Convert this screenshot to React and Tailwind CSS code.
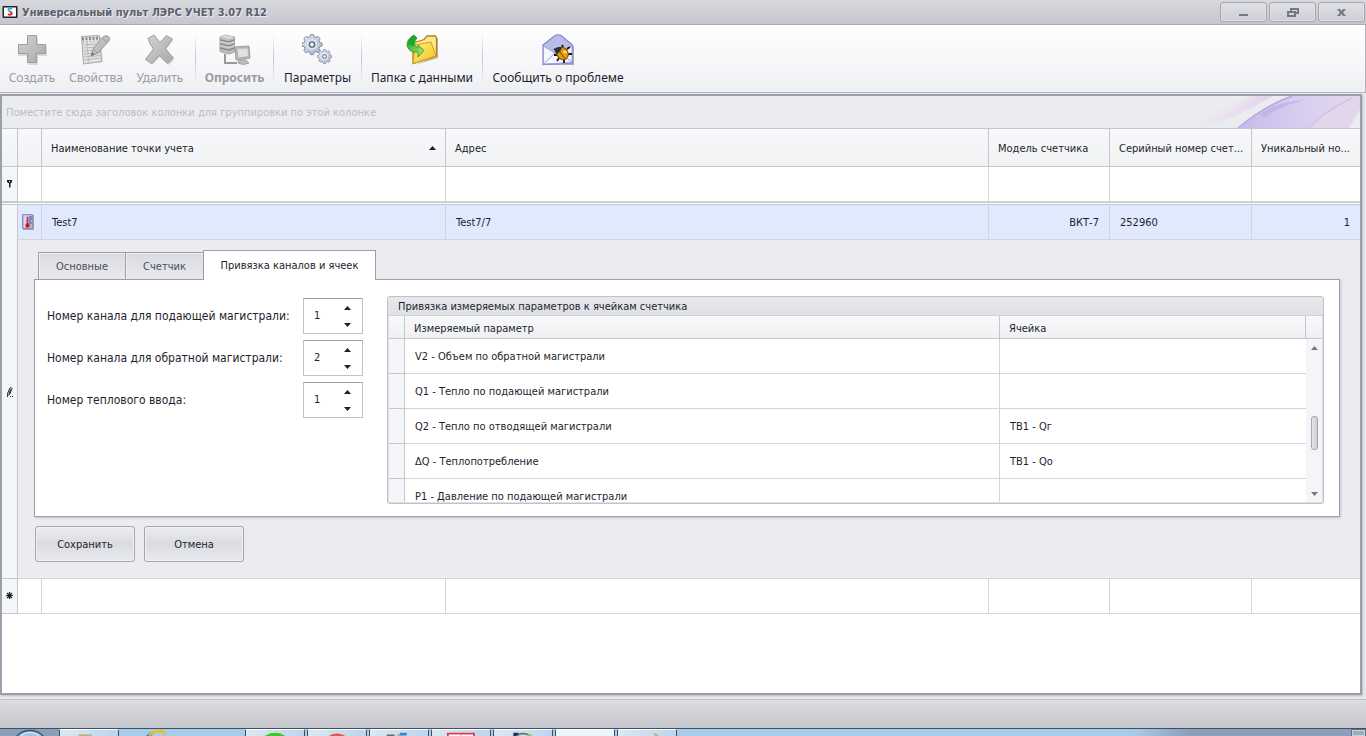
// src/App.jsx

import { useState } from "react";

const UI_FONT = "font-['DejaVu_Sans_Condensed','DejaVu_Sans',sans-serif]";
const BAR_FONT = "font-['Noto_Sans','Open_Sans',sans-serif]";

const TABS = ["Основные", "Счетчик", "Привязка каналов и ячеек"];
const TAB_WIDTHS = ["w-[87px]", "w-[78px]", "w-[173px]"];

const CHANNELS = [
  { id: "supply", label: "Номер канала для подающей магистрали:", value: 1 },
  { id: "return", label: "Номер канала для обратной магистрали:", value: 2 },
  { id: "input", label: "Номер теплового ввода:", value: 1 },
];

const PARAMS = [
  { name: "V2 - Объем по обратной магистрали", cell: "" },
  { name: "Q1 - Тепло по подающей магистрали", cell: "" },
  { name: "Q2 - Тепло по отводящей магистрали", cell: "ТВ1 - Qг" },
  { name: "ΔQ - Теплопотребление", cell: "ТВ1 - Qо" },
  { name: "P1 - Давление по подающей магистрали", cell: "" },
];

export default function App() {
  return (
    <div className={`flex min-h-screen flex-col overflow-hidden bg-[#e9eaee] text-[11px] text-[#1e1e2d] ${UI_FONT}`}>
      <TitleBar />
      <Toolbar />

      <main className="mt-px mr-1 mb-1 flex flex-1 flex-col border-2 border-[#9d9eab] bg-white shadow-[1px_1px_2px_#b9bac4]">
        <GroupPanel />
        <PointsTable />
      </main>

      <footer className="h-[29px] border-t border-[#c0c1c8] bg-linear-to-b from-[#dcdde2] to-[#c7c8ce]" />
      <Taskbar />
    </div>
  );
}

/* ---------- window caption ---------- */

function TitleBar() {
  return (
    <header className="flex h-[25px] items-center justify-between border-b border-[#a9aab5] bg-linear-to-b from-[#d8d9de] to-[#c6c7cd] pr-px pl-[2px]">
      <div className="flex items-center gap-1">
        <svg width="16" height="14" viewBox="0 0 16 14">
          <rect x="0.5" y="1" width="15" height="12" rx="1" fill="#1c2226" />
          <rect x="2" y="2.5" width="12" height="9" fill="#fff" />
          <path d="M10 4 Q8 2.500 6.500 4 Q6 5.500 8 6.500" fill="none" stroke="#22b5e8" strokeWidth="1.800" />
          <path d="M8 6.500 Q10.500 7.500 9.500 9 Q8 10.500 6 9" fill="none" stroke="#e0242c" strokeWidth="1.800" />
        </svg>
        <h1 className="pt-[2px] font-bold text-[#5d5e6d] [text-shadow:1px_1px_0_#ebecef]">
          Универсальный пульт ЛЭРС УЧЕТ 3.07 R12
        </h1>
      </div>

      <div className="flex gap-[2px]">
        <CaptionButton label="Свернуть">
          <path d="M5 10h9v2H5z" fill="#767786" />
        </CaptionButton>
        <CaptionButton label="Восстановить">
          <path d="M8 5h7v4h-7z M5 8h7v4h-7z" fill="none" stroke="#767786" strokeWidth="2" />
          <path d="M6 9h5v2h-5z" fill="#d4d5da" />
        </CaptionButton>
        <CaptionButton label="Закрыть">
          <path d="M5 5h3l1.500 2 1.500-2h3l-3 3.500 3 3.500h-3l-1.500-2-1.500 2h-3l3-3.500z" fill="#767786" />
        </CaptionButton>
      </div>
    </header>
  );
}

function CaptionButton({ label, children }) {
  return (
    <button
      type="button"
      aria-label={label}
      className="flex h-5 w-[47px] items-center justify-center rounded-[3px] border border-[#a4a5b1] bg-linear-to-b from-[#e0e1e5] to-[#cdced4] shadow-[inset_0_0_0_1px_#e1e2e6]"
    >
      <svg width="19" height="17" viewBox="0 0 19 17">
        {children}
      </svg>
    </button>
  );
}

/* ---------- toolbar ---------- */

function Toolbar() {
  return (
    <nav className={`flex h-[68px] border-r border-b border-[#b3b4bd] bg-linear-to-b from-white to-[#eff0f4] text-[12px] ${BAR_FONT}`}>
      <div className="flex pr-[3px]">
        <ToolButton label="Создать" width="w-16" disabled icon={<PlusIcon />} />
        <ToolButton label="Свойства" width="w-16" disabled icon={<NotepadIcon />} />
        <ToolButton label="Удалить" width="w-16" disabled icon={<CrossIcon />} />
      </div>
      <Separator />
      <ToolButton label="Опросить" width="w-[77px]" disabled bold icon={<ServerIcon />} />
      <Separator />
      <ToolButton label="Параметры" width="w-[87px]" icon={<GearsIcon />} />
      <Separator />
      <ToolButton label="Папка с данными" width="w-[120px]" icon={<FolderIcon />} />
      <Separator />
      <ToolButton label="Сообщить о проблеме" width="w-[150px]" icon={<BugMailIcon />} />
    </nav>
  );
}

function ToolButton({ label, width, icon, disabled, bold }) {
  return (
    <button
      type="button"
      disabled={disabled}
      className={`flex flex-col items-center gap-[3px] pt-[9px] leading-[18px] whitespace-nowrap ${width} ${
        disabled ? "text-[#9b9ca4]" : "text-[#1e1e2d]"
      } ${bold ? "font-bold" : ""}`}
    >
      {icon}
      {label}
    </button>
  );
}

function Separator() {
  return <div className="my-2 w-px bg-linear-to-b from-transparent via-[#c5c6cf] to-transparent" />;
}

function PlusIcon() {
  return (
    <svg width="32" height="32" viewBox="0 0 32 32">
      <defs>
        <linearGradient id="grey" x1="0" y1="0" x2="1" y2="1">
          <stop offset="0" stopColor="#d2d2d2" />
          <stop offset="1" stopColor="#aaaaaa" />
        </linearGradient>
      </defs>
      <path d="M12 3h10v9h9v10h-9v9h-10v-9h-10v-10h10z" fill="#000" opacity="0.12" />
      <path d="M11.500 1.500h9v9h9v9h-9v9h-9v-9h-9v-9h9z" fill="url(#grey)" stroke="#9d9d9d" />
    </svg>
  );
}

function NotepadIcon() {
  return (
    <svg width="32" height="32" viewBox="0 0 32 32">
      <path d="M3 4 L21 3 L23 28 L5 30 Z" fill="#000" opacity="0.12" />
      <path d="M1.500 2.500 L19.500 1.500 L21.500 27.500 L3.500 30 Z" fill="#e2e2e2" stroke="#a8a8a8" />
      <path
        d="M3 11l16-1M3.500 14l16-1M3.500 17l16-1M4 20l16-1.500M4 23l16-1.500M4.500 26l16-2M7 8l1.500 20"
        stroke="#bababa"
      />
      <path d="M2 5l18-1" stroke="#8e8e8e" strokeWidth="3" strokeDasharray="2 1.500" />
      <path d="M3 8l17-1" stroke="#a5a5a5" strokeWidth="1.500" strokeDasharray="1 2.500" />
      <path d="M11 22 L13 15 L23 3 Q26 0 29 3 Q31 5 28 8 L18 19 Z" fill="url(#grey)" stroke="#9a9a9a" />
      <path d="M22 4l6 5M13 15l5 4" stroke="#9a9a9a" />
      <path d="M11 22l1-4 3 2.500z" fill="#787878" />
    </svg>
  );
}

function CrossIcon() {
  return (
    <svg width="32" height="32" viewBox="0 0 32 32">
      <path
        d="M5 6 L10 2 Q14 7 17 10 L24 3 L29 7 L22 16 Q27 22 30 26 L25 31 L16 23 L8 31 L3 27 L11 16 Z"
        fill="#000"
        opacity="0.12"
      />
      <path
        d="M4 4.500 L10 1 Q13 5 16 8.500 L22.500 1.500 L28.500 5 L21.500 14.500 Q25.500 20 29.500 24 L23.500 29.500 Q19 25.500 15.500 21.500 L8 29.500 L1.500 25.500 L9.500 15 Q6 11 4 4.500 Z"
        fill="url(#grey)"
        stroke="#9d9d9d"
        strokeLinejoin="round"
      />
    </svg>
  );
}

function ServerIcon() {
  return (
    <svg width="32" height="32" viewBox="0 0 32 32">
      <path d="M1 3 L6 1 L15.500 3 V18 L10 20 L1 17.500 Z" fill="#bebebe" stroke="#a6a6a6" />
      <path d="M1 3 L6 1 L15.500 3 L10 5 Z" fill="#dadada" />
      <path d="M1 6l9 2 5.500-2M1 10l9 2 5.500-2M1 14l9 2 5.500-2" fill="none" stroke="#8c8c8c" strokeWidth="1.500" />
      <path d="M1 7.500l9 2 5.500-2M1 11.500l9 2 5.500-2" fill="none" stroke="#dedede" />
      <path d="M6 20v9h12" fill="none" stroke="#999" strokeWidth="2" />
      <path d="M16 13 L30 12 L31 24 L17 26 Z" fill="#b6b6b6" stroke="#9f9f9f" />
      <path d="M18.500 15 L28.500 14.500 L29 22 L19.500 23.500 Z" fill="#e0e0e0" />
      <path d="M20 26h7l3 3q-6 3-11 0z" fill="#bdbdbd" stroke="#a6a6a6" />
    </svg>
  );
}

function Gear({ x, y, r }) {
  return (
    <g transform={`translate(${x} ${y}) scale(${r})`}>
      <path
        d="M-1.500 -9.500h3l.6 2.200 1.900.8 2-1.200 2.200 2.200-1.200 2 .8 1.900 2.200.6v3l-2.200.6-.8 1.900 1.200 2-2.200 2.200-2-1.200-1.900.8-.6 2.200h-3l-.6-2.200-1.900-.8-2 1.200-2.200-2.200 1.200-2-.8-1.900-2.200-.6v-3l2.200-.6.8-1.900-1.200-2 2.200-2.200 2 1.200 1.900-.8z"
        transform="translate(0 -.4)"
        fill="url(#steel)"
        stroke="#7f8ba3"
      />
      <circle r="4.500" fill="none" stroke="#e3e9f3" strokeWidth="1.500" />
      <circle r="2.600" fill="#f8f9fb" stroke="#596782" strokeWidth="1.400" />
    </g>
  );
}

function GearsIcon() {
  return (
    <svg width="32" height="32" viewBox="0 0 32 32">
      <defs>
        <linearGradient id="steel" x1="0" y1="0" x2="1" y2="1">
          <stop offset="0" stopColor="#e4eaf4" />
          <stop offset="1" stopColor="#a9b5cc" />
        </linearGradient>
      </defs>
      <Gear x={10} y={10.500} r={1} />
      <Gear x={22.500} y={22.500} r={0.700} />
    </svg>
  );
}

function FolderIcon() {
  return (
    <svg width="32" height="32" viewBox="0 0 32 32">
      <defs>
        <linearGradient id="folder" x1="0" y1="0" x2="1" y2="1">
          <stop offset="0" stopColor="#fff28e" />
          <stop offset="1" stopColor="#f5c10c" />
        </linearGradient>
        <linearGradient id="arrow" x1="0" y1="0" x2="1" y2="1">
          <stop offset="0" stopColor="#0f9a20" />
          <stop offset="1" stopColor="#c3ec6a" />
        </linearGradient>
      </defs>
      <path d="M9 31 L32 24 V5 L30 3 V22 Z" fill="#555" opacity="0.4" />
      <path d="M7 9 L18 5.500 L21 2 H29.500 L30.500 4 V22 L7 29.500 Z" fill="#fde98b" stroke="#b97f10" strokeWidth="1.300" />
      <path d="M7 29.500 L9 11 L25 8 L30 22 Z" fill="url(#folder)" stroke="#d79a14" />
      <path d="M8 1 Q1 5 1 11 Q2 17 8 18 L12 18 V23 L18 16.500 L12 11 V13.500 Q9 13 8.500 10 Q8 7 11 4 Z" fill="url(#arrow)" stroke="#3ba638" />
      <path d="M7 1.500 L11 4 L8.500 7 L8 12 Q3 12 2 9 Q3 4 7 1.500Z" fill="#18a82c" />
    </svg>
  );
}

function BugMailIcon() {
  return (
    <svg width="32" height="32" viewBox="0 0 32 32">
      <path d="M3 13 L32 12 V31 H4 Z" fill="#555" opacity="0.45" />
      <path d="M1 11 L13 1.500 Q16 0 19 1.500 L30.500 11 V29 L1 30.500 Z" fill="#b9bbe8" stroke="#8386d0" strokeWidth="1.200" />
      <path d="M1.500 12 L16 21 L30 12 V28.500 L1.500 30 Z" fill="#f5f6fe" stroke="#9ea1de" />
      <path d="M1.500 30 L13 19 M30 28.500 L19 19" stroke="#9ea1de" />
      <path d="M15 16l-3-1M15 21h-3M17 24l-2 3M21 13l-1-2M25 15l3-2M26 20h4M22 26v3" stroke="#171717" strokeWidth="1.800" />
      <ellipse cx="20.500" cy="19.500" rx="5.500" ry="6.500" transform="rotate(-35 20.500 19.500)" fill="#e09b16" stroke="#835200" />
      <path d="M13 18 Q12 14 16 13 L20 13 Q19 18 15 20 Z" fill="#333" />
      <path d="M18 18l5 7" stroke="#7b4b02" />
      <ellipse cx="23" cy="18" rx="2" ry="1.500" fill="#ffd969" />
    </svg>
  );
}

/* ---------- grid ---------- */

function GroupPanel() {
  return (
    <div className="flex h-[33px] items-center justify-between border-b border-[#c5c6d0] bg-[#ebecf0] pl-1 text-[#bcbdc4]">
      <p className="pt-[3px]">Поместите сюда заголовок колонки для группировки по этой колонке</p>
      <svg width="180" height="32" viewBox="0 0 180 32">
        <defs>
          <linearGradient id="pink">
            <stop offset="0" stopColor="#e9d3ec" stopOpacity="0" />
            <stop offset="1" stopColor="#e6cdea" />
          </linearGradient>
          <linearGradient id="violet">
            <stop offset="0" stopColor="#c6bbea" />
            <stop offset="0.500" stopColor="#d8ccee" />
            <stop offset="1" stopColor="#e4dbed" />
          </linearGradient>
        </defs>
        <path d="M0 32 Q50 10 70 0 H92 Q60 20 28 32 Z" fill="url(#pink)" opacity="0.400" />
        <path d="M22 26 Q60 14 76 0 H93 Q66 16 34 28 Z" fill="url(#pink)" opacity="0.700" />
        <path d="M58 32 Q84 10 112 0 H180 V14 Q174 24 169 32 Z" fill="url(#violet)" />
        <path d="M58 32 Q84 10 112 0" fill="none" stroke="#b5a9e4" strokeWidth="1.500" />
        <path d="M80 18 Q96 6 126 4 Q98 10 84 22 Z" fill="#c2ace8" opacity="0.700" />
        <path d="M129 32 Q150 12 176 0 H180 V12 L168 32 Z" fill="#e3d6eb" />
        <path d="M129 32 Q146 14 172 2" fill="none" stroke="#d5c2e6" strokeWidth="1.500" />
      </svg>
    </div>
  );
}

function PointsTable() {
  return (
    <table className="w-full table-fixed border-separate border-spacing-0">
      <colgroup>
        <col className="w-4" />
        <col className="w-6" />
        <col className="w-[404px]" />
        <col />
        <col className="w-[121px]" />
        <col className="w-[142px]" />
        <col className="w-[108px]" />
      </colgroup>
      <thead>
        <tr className="h-[38px] bg-linear-to-b from-[#f8f9fa] to-[#f0f1f3]">
          <HeadCell />
          <HeadCell />
          <HeadCell sorted>Наименование точки учета</HeadCell>
          <HeadCell>Адрес</HeadCell>
          <HeadCell>Модель счетчика</HeadCell>
          <HeadCell>Серийный номер счет...</HeadCell>
          <HeadCell last>Уникальный но...</HeadCell>
        </tr>
      </thead>
      <tbody>
        <tr className="h-[35px]">
          <IndicatorCell>
            <path d="M2 2h5v2l-1.500 1.500v4h-1.500v-4L2 4z M4 3h1v1h-1z" fill="#1e1e2d" fillRule="evenodd" />
          </IndicatorCell>
          <EmptyCells />
        </tr>
        {/* double rule under the filter row */}
        <tr className="h-[3px]">
          <td colSpan={7} className="border-y border-[#c5c6d0] p-0" />
        </tr>
        <tr className="h-[35px] bg-[#e0e9fd]">
          <IndicatorCell rowSpan={2}>
            <path d="M2.500 7.500l2.500-5.500q1.500-1 2 .5l-2.500 6-2 1z M4 3.500l2 1M4 8l1-3" fill="none" stroke="#1e1e2d" />
            <path d="M2 10h1v1h-1zM5 10h1v1h-1zM7 10h1v1h-1z" fill="#1e1e2d" />
          </IndicatorCell>
          <td className="border-r border-b border-[#d4d5dc] p-0 pl-1">
            <ThermometerIcon />
          </td>
          <td className="border-r border-b border-[#d4d5dc] px-[10px] pt-[2px]">Test7</td>
          <td className="border-r border-b border-[#d4d5dc] px-[10px] pt-[2px]">Test7/7</td>
          <td className="border-r border-b border-[#d4d5dc] px-[10px] pt-[2px] text-right">ВКТ-7</td>
          <td className="border-r border-b border-[#d4d5dc] px-[10px] pt-[2px]">252960</td>
          <td className="border-b border-[#d4d5dc] px-[10px] pt-[2px] text-right">1</td>
        </tr>
        <tr>
          <td colSpan={6} className="border-b border-[#d4d5dc] bg-[#ebecf0] p-0">
            <PointDetails />
          </td>
        </tr>
        <tr className="h-[35px]">
          <IndicatorCell>
            <path d="M4.500 2v7M1 5.500h7M2 3l5 5M7 3l-5 5" stroke="#1e1e2d" strokeWidth="1.200" />
          </IndicatorCell>
          <EmptyCells />
        </tr>
      </tbody>
    </table>
  );
}

function HeadCell({ children, sorted, last }) {
  return (
    <th
      scope="col"
      className={`border-b border-[#c5c6d0] p-0 pl-[9px] text-left font-normal ${last ? "" : "border-r"}`}
    >
      <div className="flex items-center justify-between">
        <span className="pt-[3px] leading-4 whitespace-nowrap">{children}</span>
        {sorted && (
          <svg className="mr-[9px]" width="7" height="4" viewBox="0 0 7 4">
            <path d="M0 4L3.500 0L7 4z" fill="#1e1e2d" />
          </svg>
        )}
      </div>
    </th>
  );
}

function IndicatorCell({ rowSpan, children }) {
  return (
    <td rowSpan={rowSpan} className="border-r border-b border-[#c5c6d0] bg-[#f5f6f8] p-0">
      <svg className="mx-auto" width="9" height="12" viewBox="0 0 9 12">
        {children}
      </svg>
    </td>
  );
}

function EmptyCells() {
  return (
    <>
      <td className="border-r border-b border-[#d4d5dc] bg-white" />
      <td className="border-r border-b border-[#d4d5dc] bg-white" />
      <td className="border-r border-b border-[#d4d5dc] bg-white" />
      <td className="border-r border-b border-[#d4d5dc] bg-white" />
      <td className="border-r border-b border-[#d4d5dc] bg-white" />
      <td className="border-b border-[#d4d5dc] bg-white" />
    </>
  );
}

function ThermometerIcon() {
  return (
    <svg width="12" height="16" viewBox="0 0 12 16">
      <path d="M1 1h11v15h-11z" fill="#777" opacity="0.600" />
      <path d="M0.500 0.500h10v14h-10z" fill="#b6b5e4" stroke="#8f8ec4" />
      <path d="M2 1.500h2v12h-2z" fill="#d8d8f4" />
      <path d="M7 3h3M7 5h3M7 7h2M7 9h3" stroke="#55558c" />
      <path d="M5.500 3v8" stroke="#d8372c" strokeWidth="1.600" />
      <circle cx="5.500" cy="11.500" r="2.200" fill="#d01d18" />
    </svg>
  );
}

/* ---------- expanded row ---------- */

function PointDetails() {
  const [activeTab, setActiveTab] = useState(2);

  return (
    <div className="pt-[10px] pr-5 pb-4 pl-4">
      <div role="tablist" className="relative flex items-end pl-1">
        {TABS.map((tab, i) => (
          <button
            key={tab}
            type="button"
            role="tab"
            aria-selected={i === activeTab}
            onClick={() => setActiveTab(i)}
            className={`border-t border-[#9d9eab] pt-[2px] ${TAB_WIDTHS[i]} ${
              i === activeTab
                ? "-mb-px h-[30px] border-x bg-white"
                : "h-[27px] border-l bg-linear-to-b from-[#dadbe0] to-[#e9eaee] text-[#4c4c60] shadow-[inset_1px_1px_0_#f1f1f4]"
            }`}
          >
            {tab}
          </button>
        ))}
      </div>

      <div className="flex gap-6 border border-[#9d9eab] bg-white pr-[15px] pb-3 pl-3 shadow-[1px_1px_2px_#c3c4cc]">
        <div className="flex flex-col gap-[6px] pt-[18px]">
          {CHANNELS.map((c) => (
            <Spinner key={c.id} {...c} />
          ))}
        </div>
        <ParamsBox />
      </div>

      <div className="mt-[9px] flex gap-[9px] pl-px">
        <ActionButton>Сохранить</ActionButton>
        <ActionButton>Отмена</ActionButton>
      </div>
    </div>
  );
}

function Spinner({ id, label, value }) {
  const [current, setCurrent] = useState(value);

  return (
    <div className="flex items-center">
      <label htmlFor={id} className="w-[256px] text-[12px] whitespace-nowrap">
        {label}
      </label>
      <div className="flex h-9 w-[60px] border border-[#c0c1ca] border-t-[#9d9eab]">
        <input
          id={id}
          type="number"
          value={current}
          onChange={(e) => setCurrent(Number(e.target.value))}
          className="w-[28px] [appearance:textfield] pl-[10px] outline-none [&::-webkit-inner-spin-button]:appearance-none"
        />
        <div className="flex w-[30px] flex-col">
          <button
            type="button"
            aria-label="Больше"
            onClick={() => setCurrent(current + 1)}
            className="flex flex-1 items-center justify-center"
          >
            <svg width="7" height="4" viewBox="0 0 7 4">
              <path d="M0 4L3.500 0L7 4z" fill="#1e1e2d" />
            </svg>
          </button>
          <button
            type="button"
            aria-label="Меньше"
            onClick={() => setCurrent(current - 1)}
            className="flex flex-1 items-center justify-center"
          >
            <svg width="7" height="4" viewBox="0 0 7 4">
              <path d="M0 0L3.500 4L7 0z" fill="#1e1e2d" />
            </svg>
          </button>
        </div>
      </div>
    </div>
  );
}

function ParamsBox() {
  return (
    <section className="mt-4 flex-1 rounded-[3px] border border-[#c0c1ca] bg-linear-to-b from-[#e7e8ec] to-[#dfe0e5] to-[20px]">
      <h2 className="h-[19px] border-b border-[#d0d1d8] px-[10px] leading-[20px]">
        Привязка измеряемых параметров к ячейкам счетчика
      </h2>
      <div className="mx-px mb-px h-[186px] overflow-hidden bg-white">
        <table className="w-full table-fixed border-separate border-spacing-0">
          <colgroup>
            <col className="w-4" />
            <col className="w-[595px]" />
            <col />
            <col className="w-4" />
          </colgroup>
          <thead>
            <tr className="h-[23px] bg-linear-to-b from-[#f8f9fa] to-[#eff0f2]">
              <HeadCell />
              <HeadCell>Измеряемый параметр</HeadCell>
              <HeadCell>Ячейка</HeadCell>
              <th className="border-b border-[#c5c6d0] p-0" />
            </tr>
          </thead>
          <tbody>
            {PARAMS.map((p, i) => (
              <tr key={p.name} className="h-[35px]">
                <td className="border-r border-b border-[#c5c6d0] bg-[#f5f6f8]" />
                <td className="border-r border-b border-[#d4d5dc] px-[10px] pt-[2px]">{p.name}</td>
                <td className="border-b border-[#d4d5dc] px-[10px] pt-[2px]">{p.cell}</td>
                {i === 0 && (
                  <td rowSpan={PARAMS.length} className="bg-[#f4f5f8] p-0 align-top">
                    <ScrollBar />
                  </td>
                )}
              </tr>
            ))}
          </tbody>
        </table>
      </div>
    </section>
  );
}

function ScrollBar() {
  return (
    <div className="flex h-[163px] flex-col items-center">
      <button type="button" aria-label="Вверх" className="flex h-[17px] items-center">
        <svg width="7" height="4" viewBox="0 0 7 4">
          <path d="M0 4L3.500 0L7 4z" fill="#767786" />
        </svg>
      </button>
      <div className="flex flex-1 flex-col pt-[60px]">
        <div className="h-[34px] w-[7px] rounded-[3px] border border-[#a4a5b1] bg-linear-to-r from-[#e4e5e9] to-[#cfd0d7]" />
      </div>
      <button type="button" aria-label="Вниз" className="flex h-[17px] items-center">
        <svg width="7" height="4" viewBox="0 0 7 4">
          <path d="M0 0L3.500 4L7 0z" fill="#767786" />
        </svg>
      </button>
    </div>
  );
}

function ActionButton({ children }) {
  return (
    <button
      type="button"
      className="h-9 w-[100px] rounded-[3px] border border-[#a4a5b1] bg-linear-to-b from-[#ededf0] via-[#dadce2] to-[#e9eaee] pt-[2px] shadow-[inset_0_0_0_1px_#f1f1f4]"
    >
      {children}
    </button>
  );
}

/* ---------- taskbar, only its top edge is on screen ---------- */

function Taskbar() {
  return (
    <div className="flex h-2 overflow-hidden border-t border-[#3f5060] bg-linear-to-r from-[#a9cbea] from-[83%] to-[#8b9fb8] to-[87%]">
      <div className="flex w-[59px] justify-center bg-[#8b9fb8]">
        <svg width="30" height="7" viewBox="0 0 30 7">
          <ellipse cx="15" cy="15" rx="16" ry="13.500" fill="#a9c3da" stroke="#2d5577" strokeWidth="1.500" />
          <ellipse cx="15" cy="15" rx="13" ry="11.500" fill="none" stroke="#dceaf5" />
        </svg>
      </div>
      <TaskButton>
        <path d="M18 5h15v3H18z" fill="#c4aa79" />
      </TaskButton>
      <div className="flex w-[126px] pl-[26px]">
        <svg width="22" height="7" viewBox="0 0 22 7">
          <path d="M1 7q4-5 9-4l-4 4z" fill="#3d8ecb" />
          <path d="M4 6q8-6 15-3l1 3" fill="none" stroke="#f0bd1c" strokeWidth="2.500" />
        </svg>
      </div>
      <div className="flex gap-[2px]">
        <TaskButton>
          <ellipse cx="30" cy="12" rx="14" ry="9" fill="#3ccb22" />
        </TaskButton>
        <TaskButton>
          <ellipse cx="30" cy="12" rx="12" ry="8" fill="#e05a4c" />
        </TaskButton>
        <TaskButton>
          <path d="M16 5h9v3h-9z" fill="#5f6e77" />
          <path d="M25 8l7-5 8 5z" fill="#d9a370" />
          <path d="M31 3h8v3h-8z" fill="#2a8ce0" />
        </TaskButton>
        <TaskButton>
          <path d="M15 9V4h30v5" fill="#fff" stroke="#e5394a" strokeWidth="2" />
          <path d="M30 6v2" stroke="#3e8fd0" />
        </TaskButton>
        <TaskButton>
          <path d="M19 3h6v4h-6z" fill="#17334d" />
          <path d="M21 8q8-8 20 0" fill="#cfd9d2" stroke="#58656c" strokeWidth="1.500" />
          <path d="M35 5h4v3h-4z" fill="#a9c43a" />
        </TaskButton>
        <TaskButton bright />
        <TaskButton>
          <path d="M37 4q5-1 7 4h-4z" fill="#d9a674" />
        </TaskButton>
      </div>
      <div className="ml-auto w-[15px] border border-b-0 border-[#5d7084] bg-[#9fabb8] shadow-[inset_0_0_0_1px_#c7d2dd]" />
    </div>
  );
}

function TaskButton({ bright, children }) {
  return (
    <button
      type="button"
      aria-label="Окно"
      className={`h-[7px] w-[60px] overflow-hidden rounded-t-[2px] border-x border-t border-x-[#3d5064] border-t-white ${
        bright ? "bg-[#edf7fb]" : "bg-linear-to-r from-[#dbe8f2] to-[#bcd5ee]"
      }`}
    >
      <svg width="58" height="7" viewBox="0 0 60 8">
        {children}
      </svg>
    </button>
  );
}
